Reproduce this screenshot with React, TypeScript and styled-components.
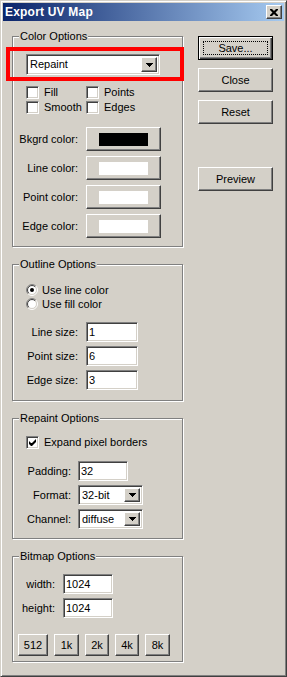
import styled, { createGlobalStyle } from 'styled-components';

const GlobalStyle = createGlobalStyle`
  html, body {
    margin: 0;
    padding: 0;
    background: #d4d0c8;
  }
  body {
    font-family: "Liberation Sans", Arial, sans-serif;
    font-size: 11px;
    line-height: 13px;
    color: #000;
  }
`;

const Window = styled.div`
  box-sizing: border-box;
  width: 287px;
  height: 677px;
  padding: 2px;
  display: flex;
  flex-direction: column;
  background: #d4d0c8;
  border: 1px solid;
  border-color: #d4d0c8 #404040 #404040 #d4d0c8;
  box-shadow: inset 1px 1px #fff, inset -1px -1px #808080;
`;

const TitleBar = styled.div`
  display: flex;
  align-items: center;
  justify-content: space-between;
  height: 18px;
  padding: 0 2px 0 2px;
  background: linear-gradient(to right, #0a246a, #a6caf0);
  color: #fff;
  font-size: 12px;
  font-weight: bold;
  letter-spacing: 0.2px;
`;

const Raised = `
  box-sizing: border-box;
  background: #d4d0c8;
  border: 1px solid;
  border-color: #fff #404040 #404040 #fff;
  box-shadow: inset -1px -1px #808080;
`;

const CloseButton = styled.div`
  ${Raised}
  width: 16px;
  height: 14px;
  display: flex;
  align-items: center;
  justify-content: center;
`;

const Body = styled.div`
  display: flex;
  flex: 1;
`;

const LeftColumn = styled.div`
  width: 172px;
  padding: 15px 0 0 9px;
`;

const RightColumn = styled.div`
  display: flex;
  flex-direction: column;
  gap: 8px;
  padding-top: 15px;
  margin-left: 14px;
`;

const Group = styled.div<{ $height: number; $top: number }>`
  position: relative;
  box-sizing: border-box;
  width: 171px;
  height: ${(p) => p.$height}px;
  padding-top: ${(p) => p.$top}px;
  border: 1px solid #808080;
  box-shadow: inset 1px 1px #fff, 1px 1px #fff;
  & + & {
    margin-top: 17px;
  }
`;

const Legend = styled.span`
  position: absolute;
  top: -7px;
  left: 6px;
  padding: 0 1px;
  background: #d4d0c8;
`;

const Indent = styled.div<{ $top?: number; $left?: number }>`
  position: relative;
  margin-left: ${(p) => p.$left ?? 13}px;
  margin-top: ${(p) => p.$top ?? 0}px;
`;

const Highlight = styled.div`
  position: absolute;
  left: -20px;
  top: -7px;
  width: 178px;
  height: 34px;
  box-sizing: border-box;
  border: 4px solid #ff0000;
  pointer-events: none;
`;

const Sunken = `
  box-sizing: border-box;
  background: #fff;
  border: 1px solid;
  border-color: #808080 #fff #fff #808080;
  box-shadow: inset 1px 1px #404040, inset -1px -1px #d4d0c8;
`;

const Combo = styled.div<{ $width: number; $height: number }>`
  ${Sunken}
  width: ${(p) => p.$width}px;
  height: ${(p) => p.$height}px;
  display: flex;
  align-items: center;
  justify-content: space-between;
  padding: 2px 2px 2px 3px;
`;

const ArrowButton = styled.div`
  ${Raised}
  width: 16px;
  height: 100%;
  display: flex;
  align-items: center;
  justify-content: center;
`;

const TextField = styled.input<{ $width: number }>`
  ${Sunken}
  width: ${(p) => p.$width}px;
  height: 20px;
  margin: 0;
  padding: 0 0 0 2px;
  font: inherit;
  color: #000;
  outline: none;
`;

const CheckGrid = styled.div`
  display: grid;
  grid-template-columns: 60px auto;
  row-gap: 2px;
`;

const OptionItem = styled.label<{ $gap: number }>`
  display: flex;
  align-items: center;
  gap: ${(p) => p.$gap}px;
  height: ${(p) => (p.$gap === 5 ? 13 : 14)}px;
  white-space: nowrap;
`;

const CheckBox = styled.span`
  ${Sunken}
  width: 13px;
  height: 13px;
  display: flex;
  align-items: center;
  justify-content: center;
  flex: none;
`;

const FieldStack = styled.div<{ $gap: number; $top?: number }>`
  display: flex;
  flex-direction: column;
  gap: ${(p) => p.$gap}px;
  margin-top: ${(p) => p.$top ?? 0}px;
`;

const FieldRow = styled.div<{ $labelWidth: number; $gap: number }>`
  display: grid;
  grid-template-columns: ${(p) => p.$labelWidth}px auto;
  column-gap: ${(p) => p.$gap}px;
  align-items: center;
  justify-content: start;
`;

const FieldLabel = styled.span`
  text-align: right;
  white-space: nowrap;
`;

const PushButton = styled.button<{ $width: number; $height: number }>`
  ${Raised}
  position: relative;
  width: ${(p) => p.$width}px;
  height: ${(p) => p.$height}px;
  margin: 0;
  padding: 0;
  font: inherit;
  color: #000;
  display: flex;
  align-items: center;
  justify-content: center;
`;

const DefaultButton = styled(PushButton)`
  border: 1px solid #000;
  box-shadow: inset 1px 1px #fff, inset -1px -1px #404040, inset -2px -2px #808080;
  &::after {
    content: '';
    position: absolute;
    inset: 4px;
    border: 1px dotted #000;
  }
`;

const Swatch = styled.span<{ $color: string }>`
  width: 49px;
  height: 13px;
  background: ${(p) => p.$color};
`;

const SizeButtons = styled.div`
  display: flex;
  gap: 6px;
  margin: 16px 0 0 5px;
`;

const Spacer = styled.div`
  height: 27px;
`;

function DownArrow() {
  return (
    <svg width="7" height="4" viewBox="0 0 7 4">
      <path d="M0 0h7v1h-1v1h-1v1h-1v1h-1v-1h-1v-1h-1v-1h-1z" fill="#000" />
    </svg>
  );
}

function Check({ checked }: { checked?: boolean }) {
  return (
    <CheckBox>
      {checked && (
        <svg width="9" height="9" viewBox="0 0 9 9">
          <path d="M1 3v3l2 2h1l4-4v-3l-4 4h-1z" fill="#000" />
        </svg>
      )}
    </CheckBox>
  );
}

function Radio({ checked }: { checked?: boolean }) {
  const arc = (r: number) => {
    const d = r * 0.7071;
    return {
      tl: `M${6 - d} ${6 + d} A${r} ${r} 0 0 1 ${6 + d} ${6 - d}`,
      br: `M${6 + d} ${6 - d} A${r} ${r} 0 0 1 ${6 - d} ${6 + d}`,
    };
  };
  const outer = arc(5.5);
  const inner = arc(4.5);
  return (
    <svg width="12" height="12" viewBox="0 0 12 12">
      <circle cx="6" cy="6" r="4.5" fill="#fff" />
      <path d={outer.tl} stroke="#808080" fill="none" />
      <path d={outer.br} stroke="#fff" fill="none" />
      <path d={inner.tl} stroke="#404040" fill="none" />
      <path d={inner.br} stroke="#d4d0c8" fill="none" />
      {checked && <circle cx="6" cy="6" r="2" fill="#000" />}
    </svg>
  );
}

function Select({ value, width }: { value: string; width: number }) {
  return (
    <Combo $width={width} $height={20}>
      <span>{value}</span>
      <ArrowButton>
        <DownArrow />
      </ArrowButton>
    </Combo>
  );
}

const colorRows = [
  { label: 'Bkgrd color:', color: '#000' },
  { label: 'Line color:', color: '#fff' },
  { label: 'Point color:', color: '#fff' },
  { label: 'Edge color:', color: '#fff' },
];

const sizeRows = [
  { label: 'Line size:', value: '1' },
  { label: 'Point size:', value: '6' },
  { label: 'Edge size:', value: '3' },
];

const sizePresets = [
  { label: '512', width: 30 },
  { label: '1k', width: 25 },
  { label: '2k', width: 24 },
  { label: '4k', width: 24 },
  { label: '8k', width: 25 },
];

export default function App() {
  return (
    <>
      <GlobalStyle />
      <Window>
        <TitleBar>
          <span>Export UV Map</span>
          <CloseButton>
            <svg width="8" height="7" viewBox="0 0 8 7">
              <path
                d="M0 0h2l2 2 2-2h2v1l-2.5 2.5 2.5 2.5v1h-2l-2-2-2 2h-2v-1l2.5-2.5-2.5-2.5z"
                fill="#000"
              />
            </svg>
          </CloseButton>
        </TitleBar>
        <Body>
          <LeftColumn>
            <Group $height={211} $top={17}>
              <Legend>Color Options</Legend>
              <Indent>
                <Combo $width={134} $height={21}>
                  <span>Repaint</span>
                  <ArrowButton>
                    <DownArrow />
                  </ArrowButton>
                </Combo>
                <Highlight />
              </Indent>
              <Indent $top={11}>
                <CheckGrid>
                  <OptionItem $gap={5}>
                    <Check />
                    Fill
                  </OptionItem>
                  <OptionItem $gap={5}>
                    <Check />
                    Points
                  </OptionItem>
                  <OptionItem $gap={5}>
                    <Check />
                    Smooth
                  </OptionItem>
                  <OptionItem $gap={5}>
                    <Check />
                    Edges
                  </OptionItem>
                </CheckGrid>
              </Indent>
              <FieldStack $gap={5} $top={13}>
                {colorRows.map((row) => (
                  <FieldRow key={row.label} $labelWidth={65} $gap={8}>
                    <FieldLabel>{row.label}</FieldLabel>
                    <PushButton $width={75} $height={24}>
                      <Swatch $color={row.color} />
                    </PushButton>
                  </FieldRow>
                ))}
              </FieldStack>
            </Group>

            <Group $height={137} $top={18}>
              <Legend>Outline Options</Legend>
              <Indent>
                <OptionItem $gap={4}>
                  <Radio checked />
                  Use line color
                </OptionItem>
                <OptionItem $gap={4}>
                  <Radio />
                  Use fill color
                </OptionItem>
              </Indent>
              <FieldStack $gap={4} $top={11}>
                {sizeRows.map((row) => (
                  <FieldRow key={row.label} $labelWidth={65} $gap={8}>
                    <FieldLabel>{row.label}</FieldLabel>
                    <TextField $width={52} defaultValue={row.value} readOnly />
                  </FieldRow>
                ))}
              </FieldStack>
            </Group>

            <Group $height={121} $top={17}>
              <Legend>Repaint Options</Legend>
              <Indent>
                <OptionItem $gap={5}>
                  <Check checked />
                  Expand pixel borders
                </OptionItem>
              </Indent>
              <FieldStack $gap={4} $top={12}>
                <FieldRow $labelWidth={58} $gap={7}>
                  <FieldLabel>Padding:</FieldLabel>
                  <TextField $width={50} defaultValue="32" readOnly />
                </FieldRow>
                <FieldRow $labelWidth={58} $gap={7}>
                  <FieldLabel>Format:</FieldLabel>
                  <Select value="32-bit" width={65} />
                </FieldRow>
                <FieldRow $labelWidth={58} $gap={7}>
                  <FieldLabel>Channel:</FieldLabel>
                  <Select value="diffuse" width={65} />
                </FieldRow>
              </FieldStack>
            </Group>

            <Group $height={106} $top={17}>
              <Legend>Bitmap Options</Legend>
              <FieldStack $gap={4}>
                <FieldRow $labelWidth={42} $gap={8}>
                  <FieldLabel>width:</FieldLabel>
                  <TextField $width={50} defaultValue="1024" readOnly />
                </FieldRow>
                <FieldRow $labelWidth={42} $gap={8}>
                  <FieldLabel>height:</FieldLabel>
                  <TextField $width={50} defaultValue="1024" readOnly />
                </FieldRow>
              </FieldStack>
              <SizeButtons>
                {sizePresets.map((b) => (
                  <PushButton key={b.label} $width={b.width} $height={22}>
                    {b.label}
                  </PushButton>
                ))}
              </SizeButtons>
            </Group>
          </LeftColumn>

          <RightColumn>
            <DefaultButton $width={75} $height={24}>
              Save...
            </DefaultButton>
            <PushButton $width={75} $height={24}>
              Close
            </PushButton>
            <PushButton $width={75} $height={24}>
              Reset
            </PushButton>
            <Spacer />
            <PushButton $width={75} $height={24}>
              Preview
            </PushButton>
          </RightColumn>
        </Body>
      </Window>
    </>
  );
}
